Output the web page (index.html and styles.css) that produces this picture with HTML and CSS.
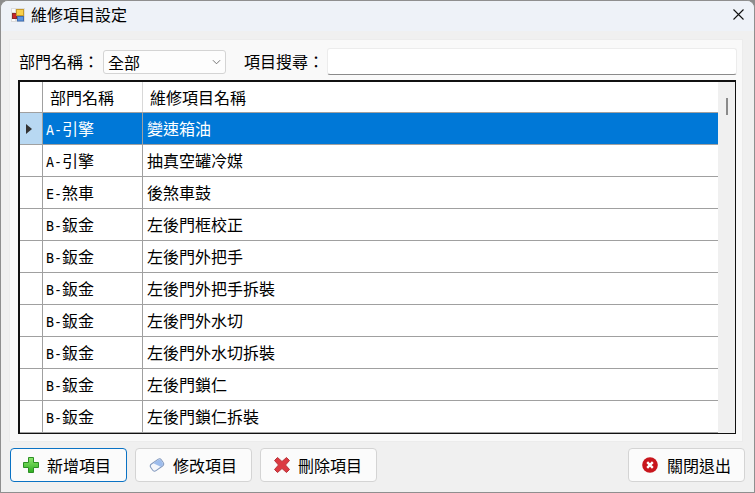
FILE: index.html
```html
<!DOCTYPE html>
<html lang="zh-Hant">
<head>
    <meta charset="UTF-8">
    <title>維修項目設定</title>
    <link rel="stylesheet" href="styles.css">
</head>
<body>
    <div class="window">
        <div class="title-bar">
            <svg class="app-icon" viewBox="0 0 14 14">
                <rect x="0" y="0" width="14" height="14" fill="#dcdcdc"/>
                <rect x="1" y="1" width="3" height="3" fill="#fafafa"/>
                <rect x="1" y="10" width="3" height="3" fill="#fafafa"/>
                <rect x="1.500" y="5.500" width="4" height="5" fill="#c8262a" stroke="#8a2a2a"/>
                <rect x="6.500" y="8.500" width="6" height="4.500" fill="#5b94e0" stroke="#3f6cb0"/>
                <rect x="5.500" y="1.500" width="7" height="6" fill="#f8d04c" stroke="#c79a2a"/>
            </svg>
            <span class="title-text">維修項目設定</span>
            <svg class="close-icon" viewBox="0 0 11 11">
                <path d="M0.500 0.500L10.500 10.500M10.500 0.500L0.500 10.500" stroke="#111" stroke-width="1.100" fill="none"/>
            </svg>
        </div>

        <div class="content">
            <div class="panel">
                <div class="filter-row">
                    <label class="filter-label">部門名稱：</label>
                    <div class="dept-select">
                        <span>全部</span>
                        <svg class="chevron" viewBox="0 0 10 6">
                            <path d="M1 1L5 5L9 1" stroke="#666" stroke-width="1" fill="none"/>
                        </svg>
                    </div>
                    <label class="filter-label search-label">項目搜尋：</label>
                    <input class="search-input" type="text">
                </div>

                <div class="grid">
                    <div class="grid-body">
                        <div class="grid-row header-row">
                            <div class="row-head"></div>
                            <div class="col-dept">部門名稱</div>
                            <div class="col-name">維修項目名稱</div>
                        </div>
                        <div class="grid-row selected">
                            <div class="row-head">
                                <svg class="row-arrow" viewBox="0 0 6 10"><path d="M0 0L6 5L0 10Z" fill="#333"/></svg>
                            </div>
                            <div class="col-dept"><span class="code">A-</span>引擎</div>
                            <div class="col-name">變速箱油</div>
                        </div>
                        <div class="grid-row">
                            <div class="row-head"></div>
                            <div class="col-dept"><span class="code">A-</span>引擎</div>
                            <div class="col-name">抽真空罐冷媒</div>
                        </div>
                        <div class="grid-row">
                            <div class="row-head"></div>
                            <div class="col-dept"><span class="code">E-</span>煞車</div>
                            <div class="col-name">後煞車鼓</div>
                        </div>
                        <div class="grid-row">
                            <div class="row-head"></div>
                            <div class="col-dept"><span class="code">B-</span>鈑金</div>
                            <div class="col-name">左後門框校正</div>
                        </div>
                        <div class="grid-row">
                            <div class="row-head"></div>
                            <div class="col-dept"><span class="code">B-</span>鈑金</div>
                            <div class="col-name">左後門外把手</div>
                        </div>
                        <div class="grid-row">
                            <div class="row-head"></div>
                            <div class="col-dept"><span class="code">B-</span>鈑金</div>
                            <div class="col-name">左後門外把手拆裝</div>
                        </div>
                        <div class="grid-row">
                            <div class="row-head"></div>
                            <div class="col-dept"><span class="code">B-</span>鈑金</div>
                            <div class="col-name">左後門外水切</div>
                        </div>
                        <div class="grid-row">
                            <div class="row-head"></div>
                            <div class="col-dept"><span class="code">B-</span>鈑金</div>
                            <div class="col-name">左後門外水切拆裝</div>
                        </div>
                        <div class="grid-row">
                            <div class="row-head"></div>
                            <div class="col-dept"><span class="code">B-</span>鈑金</div>
                            <div class="col-name">左後門鎖仁</div>
                        </div>
                        <div class="grid-row">
                            <div class="row-head"></div>
                            <div class="col-dept"><span class="code">B-</span>鈑金</div>
                            <div class="col-name">左後門鎖仁拆裝</div>
                        </div>
                    </div>
                    <div class="scrollbar"><div class="scroll-thumb"></div></div>
                </div>
            </div>

            <div class="button-row">
                <button class="btn btn-primary" type="button">
                    <svg class="btn-icon" viewBox="0 0 16 16">
                        <defs>
                            <linearGradient id="plusFill" x1="0" y1="0" x2="0" y2="1">
                                <stop offset="0" stop-color="#8fe86f"/>
                                <stop offset="1" stop-color="#2fae22"/>
                            </linearGradient>
                        </defs>
                        <path d="M5.500 0.500h5v5h5v5h-5v5h-5v-5h-5v-5h5z" fill="url(#plusFill)" stroke="#2c8f24"/>
                    </svg>
                    新增項目
                </button>
                <button class="btn" type="button">
                    <svg class="btn-icon" viewBox="0 0 16 16">
                        <g transform="rotate(-35 8 8)">
                            <rect x="1.500" y="4" width="13" height="8" rx="2.500" fill="#f4f6fb" stroke="#8298bd"/>
                            <path d="M6 4.500H12Q14 4.500 14 7V9Q14 11.500 12 11.500H10Q8 8 6 4.500Z" fill="#9dbcec"/>
                        </g>
                    </svg>
                    修改項目
                </button>
                <button class="btn" type="button">
                    <svg class="btn-icon" viewBox="0 0 16 16">
                        <path d="M3.500 0.500L8 4.500L12.500 0.500L15.500 3.500L11.500 8L15.500 12.500L12.500 15.500L8 11.500L3.500 15.500L0.500 12.500L4.500 8L0.500 3.500Z" fill="#dc3a42" stroke="#b8343a"/>
                    </svg>
                    刪除項目
                </button>
                <button class="btn btn-exit" type="button">
                    <svg class="btn-icon" viewBox="0 0 16 16">
                        <circle cx="8" cy="8" r="7.800" fill="#c8161d"/>
                        <path d="M5.200 5.200L10.800 10.800M10.800 5.200L5.200 10.800" stroke="#fff" stroke-width="2.400"/>
                    </svg>
                    關閉退出
                </button>
            </div>
        </div>
    </div>
</body>
</html>
```

FILE: styles.css
```css
* {
    margin: 0;
    padding: 0;
    box-sizing: border-box;
    font-family: 'Noto Sans CJK TC', sans-serif;
}

html, body {
    width: 755px;
    height: 493px;
    overflow: hidden;
    background-color: #8c8c8c;
}

.window {
    width: 755px;
    height: 493px;
    display: flex;
    flex-direction: column;
    border: 1px solid #8f8f8f;
    border-top-left-radius: 8px;
    border-top-right-radius: 8px;
    background-color: #f0f0f0;
    overflow: hidden;
    color: #000;
    font-size: 16px;
}

.title-bar {
    height: 30px;
    flex-shrink: 0;
    display: flex;
    align-items: center;
    padding: 0 10px 3px 10px;
    background-color: #eef2f8;
}

.app-icon {
    width: 14px;
    height: 14px;
    margin-right: 6px;
}

.title-text {
    flex: 1;
    line-height: 24px;
    padding-bottom: 1px;
}

.close-icon {
    width: 11px;
    height: 11px;
}

.content {
    flex: 1;
    display: flex;
    flex-direction: column;
    padding: 8px 9px 0 8px;
}

.panel {
    width: 734px;
    height: 403px;
    padding: 8px 0 0 8px;
    background-color: #f9f9f9;
    border: 1px solid #ececec;
}

.filter-row {
    display: flex;
    align-items: center;
    height: 27px;
    margin-bottom: 5px;
    padding-left: 1px;
}

.filter-label {
    width: 84px;
    line-height: 24px;
    padding-bottom: 2px;
    white-space: nowrap;
}

.search-label {
    width: 83px;
    margin-left: 18px;
}

.dept-select {
    width: 123px;
    height: 24px;
    display: flex;
    align-items: center;
    justify-content: space-between;
    padding: 0 4px 0 4px;
    background-color: #fdfdfd;
    border: 1px solid #d4d4d4;
    border-radius: 3px;
}

.chevron {
    width: 9px;
    height: 6px;
}

.search-input {
    width: 410px;
    height: 27px;
    background: white;
    border: 1px solid #ececec;
    border-bottom: 1px solid #8a8a8a;
    border-radius: 3px;
    outline: none;
}

.grid {
    width: 718px;
    height: 354px;
    display: flex;
    border: 2px solid #111;
    border-right-width: 1px;
    border-bottom-width: 1px;
    background-color: white;
    overflow: hidden;
}

.grid-body {
    width: 698px;
    flex-shrink: 0;
}

.grid-row {
    display: flex;
    height: 32px;
    line-height: 31px;
    border-bottom: 1px solid #a0a0a0;
    white-space: nowrap;
}

.header-row {
    height: 31px;
    line-height: 30px;
}

.row-head {
    width: 23px;
    flex-shrink: 0;
    display: flex;
    align-items: center;
    padding-left: 6px;
    border-right: 1px solid #a0a0a0;
}

.col-dept {
    width: 100px;
    flex-shrink: 0;
    padding-left: 3px;
    border-right: 1px solid #a0a0a0;
}

.col-name {
    flex: 1;
    padding-left: 4px;
}

.header-row .col-dept {
    padding-left: 7px;
    border-right-color: #d8d8d8;
}

.header-row .col-name {
    padding-left: 7px;
}

.code {
    font-family: 'DejaVu Sans Mono', monospace;
    font-size: 13.33px;
}

.selected .row-head {
    background-color: #b8d8f2;
}

.selected .col-dept,
.selected .col-name {
    background-color: #0078d7;
    color: white;
}

.row-arrow {
    width: 6px;
    height: 10px;
}

.scrollbar {
    flex: 1;
    background-color: #f0f0f0;
    padding: 16px 0 0 8px;
}

.scroll-thumb {
    width: 2px;
    height: 17px;
    background-color: #8a8a8a;
}

.button-row {
    display: flex;
    gap: 8px;
    margin-top: 6px;
    margin-left: 1px;
}

.btn {
    height: 34px;
    width: 117px;
    display: flex;
    align-items: center;
    gap: 8px;
    padding-left: 13px;
    font-size: 16px;
    color: #000;
    background-color: #fbfbfb;
    border: 1px solid #d4d4d4;
    border-radius: 4px;
}

.btn-primary {
    padding-left: 12px;
    border-color: #0a72c4;
}

.btn-exit {
    margin-left: auto;
    gap: 9px;
}

.btn-icon {
    width: 16px;
    height: 16px;
}
```
